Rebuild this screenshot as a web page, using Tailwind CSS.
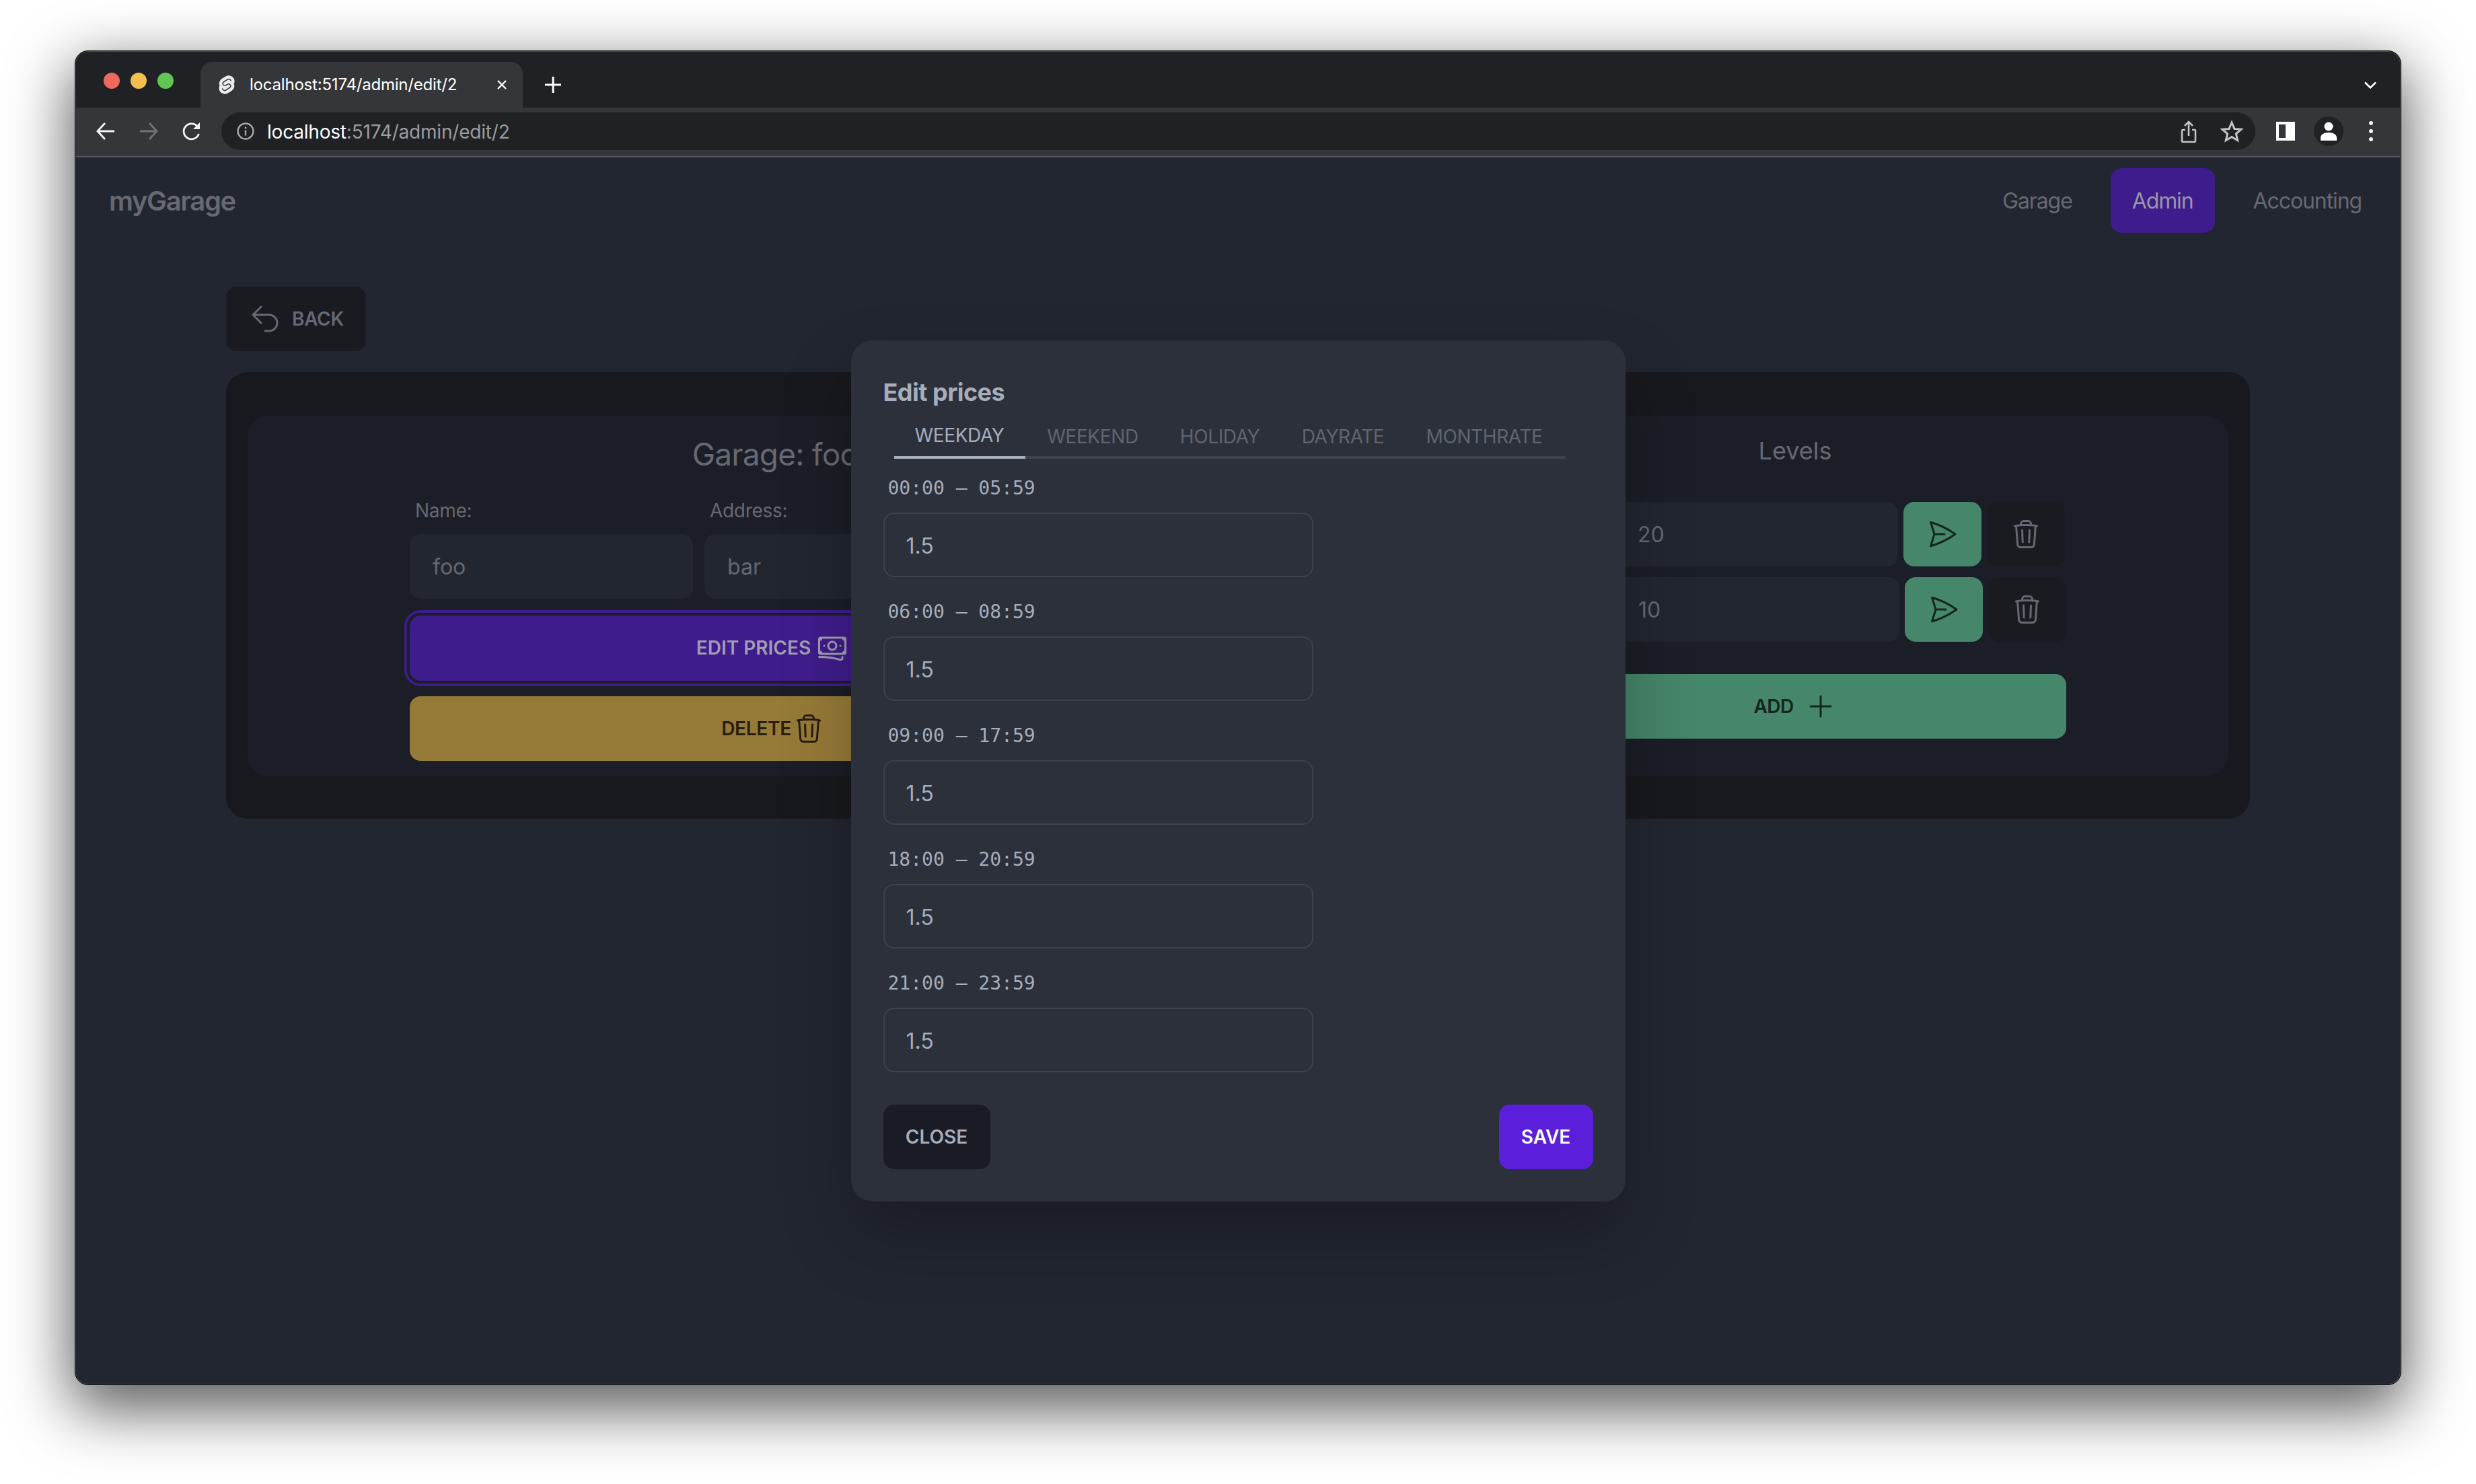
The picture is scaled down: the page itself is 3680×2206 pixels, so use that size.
<!DOCTYPE html>
<html lang="en">
  <head>
    <meta charset="UTF-8" />
    <title>localhost:5174/admin/edit/2</title>
    <script src="https://cdn.jsdelivr.net/npm/@tailwindcss/browser@4"></script>
  </head>
  <body class="bg-white font-['Inter',sans-serif]">
    <div class="w-[3680px] h-[2206px] pl-[111px] pt-[75px] overflow-hidden">
      <!-- Browser window -->
      <div class="relative w-[3458px] h-[1984px] rounded-[20px] border border-black bg-[#222630] shadow-[0_30px_90px_6px_rgba(0,0,0,0.65)] overflow-hidden flex flex-col">
        <div class="absolute inset-0 z-30 rounded-[19px] border border-[#4a4c54] pointer-events-none"></div>

        <!-- Tab strip -->
        <div class="h-[84px] shrink-0 bg-[#202124] flex items-end pl-[186px] relative">
          <div class="absolute left-[42px] top-[32px] flex gap-[16px]">
            <span class="w-[24px] h-[24px] rounded-full bg-[#ec6a5e]"></span>
            <span class="w-[24px] h-[24px] rounded-full bg-[#f4bf4f]"></span>
            <span class="w-[24px] h-[24px] rounded-full bg-[#61c554]"></span>
          </div>
          <div class="w-[479px] h-[68px] bg-[#35363a] rounded-t-[18px] flex items-center pl-[26px] text-white">
            <svg class="w-[26px] h-[30px] mr-[21px] shrink-0" viewBox="0 0 24 24" fill="#ececec" stroke="#ececec" stroke-width="1.5">
              <path d="M10.354 21.125a4.44 4.44 0 0 1-4.765-1.767 4.109 4.109 0 0 1-.703-3.107 3.898 3.898 0 0 1 .134-.522l.105-.321.287.21a7.21 7.21 0 0 0 2.186 1.092l.208.063-.02.208a1.253 1.253 0 0 0 .226.83 1.337 1.337 0 0 0 1.435.533 1.231 1.231 0 0 0 .343-.15l5.59-3.562a1.164 1.164 0 0 0 .524-.778 1.242 1.242 0 0 0-.211-.937 1.338 1.338 0 0 0-1.435-.533 1.23 1.23 0 0 0-.343.15l-2.133 1.36a4.078 4.078 0 0 1-1.135.499 4.44 4.44 0 0 1-4.765-1.766 4.108 4.108 0 0 1-.702-3.108 3.855 3.855 0 0 1 1.742-2.582l5.589-3.563a4.072 4.072 0 0 1 1.135-.499 4.44 4.44 0 0 1 4.765 1.767 4.109 4.109 0 0 1 .703 3.107 3.943 3.943 0 0 1-.134.522l-.105.321-.286-.21a7.204 7.204 0 0 0-2.187-1.093l-.208-.063.02-.207a1.255 1.255 0 0 0-.226-.831 1.337 1.337 0 0 0-1.435-.532 1.231 1.231 0 0 0-.343.15L8.62 9.368a1.162 1.162 0 0 0-.524.778 1.24 1.24 0 0 0 .211.937 1.338 1.338 0 0 0 1.435.533 1.235 1.235 0 0 0 .344-.151l2.132-1.36a4.067 4.067 0 0 1 1.135-.498 4.44 4.44 0 0 1 4.765 1.766 4.108 4.108 0 0 1 .702 3.108 3.857 3.857 0 0 1-1.742 2.583l-5.589 3.562a4.072 4.072 0 0 1-1.135.499m10.358-17.95C18.484-.015 14.082-.96 10.9 1.068L5.31 4.63a6.412 6.412 0 0 0-2.896 4.295 6.753 6.753 0 0 0 .666 4.336 6.43 6.43 0 0 0-.96 2.396 6.833 6.833 0 0 0 1.168 5.167c2.229 3.19 6.63 4.135 9.812 2.108l5.59-3.562a6.41 6.41 0 0 0 2.896-4.295 6.756 6.756 0 0 0-.665-4.336 6.429 6.429 0 0 0 .958-2.396 6.831 6.831 0 0 0-1.167-5.168Z" />
            </svg>
            <span class="text-[24px] leading-none w-[365px] whitespace-nowrap tracking-[-0.2px]">localhost:5174/admin/edit/2</span>
            <svg class="w-[20px] h-[20px]" viewBox="0 0 20 20" stroke="#fff" stroke-width="2.4" fill="none"><path d="M4 4l12 12M16 4L4 16" /></svg>
          </div>
          <svg class="w-[26px] h-[26px] ml-[32px] mb-[21px]" viewBox="0 0 26 26" stroke="#fff" stroke-width="3" fill="none"><path d="M13 1v24M1 13h24" /></svg>
          <svg class="absolute right-[34px] top-[44px] w-[22px] h-[14px]" viewBox="0 0 22 14" stroke="#fff" stroke-width="2.6" fill="none"><path d="M3 2.5l8 8 8-8" /></svg>
        </div>

        <!-- Toolbar -->
        <div class="h-[74px] shrink-0 bg-[#35363a] border-b-2 border-[#55575d] flex items-center pl-[30px] pr-[30px] pb-[2px]">
          <svg class="w-[30px] h-[30px]" viewBox="0 0 30 30" stroke="#f1f3f4" stroke-width="2.8" fill="none"><path d="M28 15H3M14 3L3 15l11 12" /></svg>
          <svg class="w-[30px] h-[30px] ml-[34px]" viewBox="0 0 30 30" stroke="#717275" stroke-width="2.8" fill="none"><path d="M2 15h25M16 3l11 12-11 12" /></svg>
          <svg class="w-[30px] h-[30px] ml-[34px]" viewBox="0 0 30 30" stroke="#f1f3f4" stroke-width="2.8" fill="none"><path d="M25.5 19a11.5 11.5 0 1 1-2.2-11.2L26 11" /><path d="M27 2v10H17z" fill="#f1f3f4" stroke="none" /></svg>
          <div class="ml-[29px] w-[3023px] h-[56px] rounded-full bg-[#202124] flex items-center pl-[23px] relative">
            <svg class="w-[26px] h-[26px]" viewBox="0 0 26 26" fill="none" stroke="#a4a6a9" stroke-width="2.4"><circle cx="13" cy="13" r="11.5" /><path d="M13 11.5v8" /><path d="M13 6.5v3" /></svg>
            <span class="ml-[19px] text-[28px] text-white whitespace-nowrap tracking-[-0.2px] pt-[2px]">localhost<span class="text-[#9a9ca0]">:5174/admin/edit/2</span></span>
            <svg class="absolute left-[2912px] top-[12px] w-[24px] h-[34px]" viewBox="0 0 24 34" fill="none" stroke="#c2c4c6" stroke-width="2.6"><path d="M7 14H3.5a1.5 1.5 0 0 0-1.5 1.5v15A1.5 1.5 0 0 0 3.500 32h17a1.500 1.500 0 0 0 1.500-1.500v-15a1.500 1.500 0 0 0-1.500-1.500H17" /><path d="M12 23V3M6 8l6-6 6 6" /></svg>
            <svg class="absolute left-[2971px] top-[11px] w-[34px] h-[34px]" viewBox="0 0 34 34" fill="none" stroke="#c2c4c6" stroke-width="3"><path d="M17 4l4 9.500 10 .8-7.600 6.500 2.300 9.900L17 25.500 8.300 30.700l2.300-9.900L3 14.300l10-.8z" /></svg>
          </div>
          <div class="ml-[31px] w-[28px] h-[28px] border-[4px] border-white border-r-[14px] box-border"></div>
          <div class="ml-[28px] w-[44px] h-[44px] rounded-full bg-[#202124] flex items-center justify-center">
            <svg class="w-[26px] h-[30px]" viewBox="0 0 26 30" fill="#fff"><circle cx="13" cy="8" r="6.500" /><path d="M1 29v-4c0-5 5-8 12-8s12 3 12 8v4z" /></svg>
          </div>
          <div class="ml-[38px] flex flex-col gap-[6px]">
            <span class="w-[6px] h-[6px] rounded-full bg-[#f1f3f4]"></span>
            <span class="w-[6px] h-[6px] rounded-full bg-[#f1f3f4]"></span>
            <span class="w-[6px] h-[6px] rounded-full bg-[#f1f3f4]"></span>
          </div>
        </div>

        <!-- Page -->
        <div class="relative flex-1 text-[#666973]">
          <nav class="flex items-center justify-between pl-[50px] pr-[26px] pt-[16px]">
            <span class="text-[40px] font-semibold tracking-[-1.4px] pt-[2px]">myGarage</span>
            <div class="flex items-center gap-[25px] text-[32px] tracking-[-1.1px]">
              <a class="h-[96px] px-[32px] flex items-center pt-[2px]">Garage</a>
              <a class="h-[96px] px-[32px] flex items-center pt-[2px] rounded-2xl bg-[#3f1c8c] text-[#9a97a6]">Admin</a>
              <a class="h-[96px] px-[32px] flex items-center pt-[2px]">Accounting</a>
            </div>
          </nav>

          <div class="pl-[224px] mt-[80px]">
            <button class="w-[208px] h-[96px] rounded-2xl bg-[#191b20] flex items-center pl-[34px] gap-[16px] text-[28px] font-semibold tracking-[-0.3px]">
              <svg class="w-[48px] h-[48px] shrink-0" viewBox="0 0 24 24" fill="none" stroke="currentColor" stroke-width="1.500" stroke-linecap="round" stroke-linejoin="round"><path d="M9 15L3 9m0 0l6-6M3 9h12a6 6 0 010 12h-3" /></svg>
              BACK
            </button>

            <div class="mt-[31px] w-[3008px] rounded-[32px] bg-[#18191e] px-[32px] pt-[65px] pb-[63px]">
              <div class="rounded-[32px] bg-[#1b1e26] h-[536px] px-[241px] flex justify-between">
                <!-- Garage form -->
                <div class="w-[1078px] pt-[27px]">
                  <h2 class="h-[60px] leading-[60px] text-[46px] text-center tracking-[-0.8px] pl-[8px]">Garage: foo</h2>
                  <div class="flex gap-[17px] mt-[36px] text-[28px] leading-[36px] tracking-[-0.3px]">
                    <label class="w-[421px] pl-[8px]">Name:</label>
                    <label class="w-[421px] pl-[8px]">Address:</label>
                  </div>
                  <div class="flex gap-[17px] mt-[17px] text-[32px]">
                    <div class="w-[421px] h-[96px] rounded-2xl bg-[#212630] flex items-center pl-[34px] pt-[2px]">foo</div>
                    <div class="w-[421px] h-[96px] rounded-2xl bg-[#212630] flex items-center pl-[34px] pt-[2px]">bar</div>
                  </div>
                  <button class="mt-[25px] w-full h-[97px] pb-[2px] rounded-2xl bg-[#3f1c8c] outline-[4px] outline-offset-[4px] outline-[#3f1c8c] flex items-center justify-center gap-[8px] text-[28px] font-semibold text-[#a29eb0]">
                    EDIT PRICES
                    <svg class="w-[48px] h-[48px]" viewBox="0 0 24 24" fill="none" stroke="currentColor" stroke-width="1.500" stroke-linecap="round" stroke-linejoin="round"><path d="M2.250 18.750a60.070 60.070 0 0115.797 2.101c.727.198 1.453-.342 1.453-1.096V18.750M3.750 4.500v.75A.75.75 0 013 6h-.75m0 0v-.375c0-.621.504-1.125 1.125-1.125H20.250M2.250 6v9m18-10.500v.75c0 .414.336.75.75.75h.75m-1.500-1.500h.375c.621 0 1.125.504 1.125 1.125v9.750c0 .621-.504 1.125-1.125 1.125h-.375m1.500-1.500H21a.75.75 0 00-.75.75v.75m0 0H3.750m0 0h-.375a1.125 1.125 0 01-1.125-1.125V15m1.500 1.500v-.75A.75.75 0 003 15h-.75M15 10.500a3 3 0 11-6 0 3 3 0 016 0zm3 0h.008v.008H18V10.500zm-12 0h.008v.008H6V10.500z" /></svg>
                  </button>
                  <button class="mt-[23px] w-full h-[96px] rounded-2xl bg-[#967a37] flex items-center justify-center gap-[2px] pl-[2px] text-[28px] font-semibold tracking-[-0.3px] text-[#281e0b]">
                    DELETE
                    <svg class="w-[48px] h-[48px]" viewBox="0 0 24 24" fill="none" stroke="currentColor" stroke-width="1.500" stroke-linecap="round" stroke-linejoin="round"><path d="M14.740 9l-.346 9m-4.788 0L9.260 9m9.968-3.210c.342.052.682.107 1.022.166m-1.022-.165L18.160 19.673a2.250 2.250 0 01-2.244 2.077H8.084a2.250 2.250 0 01-2.244-2.077L4.772 5.790m14.456 0a48.108 48.108 0 00-3.478-.397m-12 .562c.34-.059.68-.114 1.022-.165m0 0a48.110 48.110 0 013.478-.397m7.500 0v-.916c0-1.180-.91-2.164-2.090-2.201a51.964 51.964 0 00-3.320 0c-1.180.037-2.090 1.022-2.090 2.201v.916m7.500 0a48.667 48.667 0 00-7.500 0" /></svg>
                  </button>
                </div>

                <!-- Levels -->
                <div class="w-[812px] pt-[22px]">
                  <h2 class="h-[60px] leading-[60px] text-[36px] text-center pl-[6px]">Levels</h2>
                  <div class="mt-[46px] flex justify-end gap-[8px] pr-[2px] text-[32px]">
                    <div class="w-[419px] h-[96px] rounded-2xl bg-[#212630] flex items-center pl-[32px] pt-[1px]">20</div>
                    <button class="w-[116px] h-[96px] rounded-2xl bg-[#46866a] text-[#14261d] flex items-center justify-center">
                      <svg class="w-[48px] h-[48px]" viewBox="0 0 24 24" fill="none" stroke="currentColor" stroke-width="1.500" stroke-linecap="round" stroke-linejoin="round"><path d="M6 12L3.269 3.126A59.768 59.768 0 0121.485 12 59.770 59.770 0 013.270 20.876L5.999 12zm0 0h7.500" /></svg>
                    </button>
                    <button class="w-[116px] h-[96px] rounded-2xl bg-[#191b20] flex items-center justify-center">
                      <svg class="w-[48px] h-[48px]" viewBox="0 0 24 24" fill="none" stroke="currentColor" stroke-width="1.500" stroke-linecap="round" stroke-linejoin="round"><path d="M14.740 9l-.346 9m-4.788 0L9.260 9m9.968-3.210c.342.052.682.107 1.022.166m-1.022-.165L18.160 19.673a2.250 2.250 0 01-2.244 2.077H8.084a2.250 2.250 0 01-2.244-2.077L4.772 5.790m14.456 0a48.108 48.108 0 00-3.478-.397m-12 .562c.34-.059.68-.114 1.022-.165m0 0a48.110 48.110 0 013.478-.397m7.500 0v-.916c0-1.180-.91-2.164-2.090-2.201a51.964 51.964 0 00-3.320 0c-1.180.037-2.090 1.022-2.090 2.201v.916m7.500 0a48.667 48.667 0 00-7.500 0" /></svg>
                    </button>
                  </div>
                  <div class="mt-[16px] flex justify-end gap-[8px] text-[32px]">
                    <div class="w-[421px] h-[96px] rounded-2xl bg-[#212630] flex items-center pl-[33px] pt-[1px]">10</div>
                    <button class="w-[116px] h-[96px] rounded-2xl bg-[#46866a] text-[#14261d] flex items-center justify-center">
                      <svg class="w-[48px] h-[48px]" viewBox="0 0 24 24" fill="none" stroke="currentColor" stroke-width="1.500" stroke-linecap="round" stroke-linejoin="round"><path d="M6 12L3.269 3.126A59.768 59.768 0 0121.485 12 59.770 59.770 0 013.270 20.876L5.999 12zm0 0h7.500" /></svg>
                    </button>
                    <button class="w-[116px] h-[96px] rounded-2xl bg-[#191b20] flex items-center justify-center">
                      <svg class="w-[48px] h-[48px]" viewBox="0 0 24 24" fill="none" stroke="currentColor" stroke-width="1.500" stroke-linecap="round" stroke-linejoin="round"><path d="M14.740 9l-.346 9m-4.788 0L9.260 9m9.968-3.210c.342.052.682.107 1.022.166m-1.022-.165L18.160 19.673a2.250 2.250 0 01-2.244 2.077H8.084a2.250 2.250 0 01-2.244-2.077L4.772 5.790m14.456 0a48.108 48.108 0 00-3.478-.397m-12 .562c.34-.059.68-.114 1.022-.165m0 0a48.110 48.110 0 013.478-.397m7.500 0v-.916c0-1.180-.91-2.164-2.090-2.201a51.964 51.964 0 00-3.320 0c-1.180.037-2.090 1.022-2.090 2.201v.916m7.500 0a48.667 48.667 0 00-7.500 0" /></svg>
                    </button>
                  </div>
                  <button class="mt-[48px] w-full h-[96px] rounded-2xl bg-[#46866a] text-[#14261d] flex items-center justify-center gap-[16px] pl-[6px] text-[28px] font-semibold tracking-[-0.6px]">
                    ADD
                    <svg class="w-[48px] h-[48px]" viewBox="0 0 24 24" fill="none" stroke="currentColor" stroke-width="1.500" stroke-linecap="round" stroke-linejoin="round"><path d="M12 4.500v15m7.500-7.500h-15" /></svg>
                  </button>
                </div>
              </div>
            </div>
          </div>

          <!-- Edit prices modal -->
          <div class="absolute inset-0 flex items-center justify-center">
            <div class="w-[1151px] h-[1280px] rounded-[32px] bg-[#2b303b] shadow-[0_50px_100px_rgba(0,0,0,0.25)] p-[48px] text-[#a6adbb]">
              <h3 class="text-[36px] leading-[58px] font-bold tracking-[-0.5px]">Edit prices</h3>
              <div class="ml-[16px] w-[998px] h-[68px] mt-[2px] flex border-b-4 border-[#3d424e] text-[28px] tracking-[-0.4px] text-[#61656f]">
                <span class="w-[195px] h-[68px] pt-[6px] pb-[4px] flex items-center justify-center border-b-4 border-[#a6adbb] text-[#a6adbb]">WEEKDAY</span>
                <span class="ml-[2px] w-[197px] h-[64px] pt-[6px] flex items-center justify-center">WEEKEND</span>
                <span class="w-[181px] h-[64px] pt-[6px] flex items-center justify-center">HOLIDAY</span>
                <span class="w-[185px] h-[64px] pt-[6px] flex items-center justify-center">DAYRATE</span>
                <span class="w-[235px] h-[64px] pt-[6px] flex items-center justify-center">MONTHRATE</span>
              </div>
              <div class="mt-[26px] flex flex-col gap-[34px]">
                <div>
                  <div class="pl-[7px] h-[36px] leading-[36px] text-[28px] font-['DejaVu_Sans_Mono',monospace]">00:00 – 05:59</div>
                  <div class="mt-[18px] w-[639px] h-[96px] rounded-2xl border-2 border-[#3d424e] flex items-center pl-[32px] pt-[3px] text-[32px]">1.5</div>
                </div>
                <div>
                  <div class="pl-[7px] h-[36px] leading-[36px] text-[28px] font-['DejaVu_Sans_Mono',monospace]">06:00 – 08:59</div>
                  <div class="mt-[18px] w-[639px] h-[96px] rounded-2xl border-2 border-[#3d424e] flex items-center pl-[32px] pt-[3px] text-[32px]">1.5</div>
                </div>
                <div>
                  <div class="pl-[7px] h-[36px] leading-[36px] text-[28px] font-['DejaVu_Sans_Mono',monospace]">09:00 – 17:59</div>
                  <div class="mt-[18px] w-[639px] h-[96px] rounded-2xl border-2 border-[#3d424e] flex items-center pl-[32px] pt-[3px] text-[32px]">1.5</div>
                </div>
                <div>
                  <div class="pl-[7px] h-[36px] leading-[36px] text-[28px] font-['DejaVu_Sans_Mono',monospace]">18:00 – 20:59</div>
                  <div class="mt-[18px] w-[639px] h-[96px] rounded-2xl border-2 border-[#3d424e] flex items-center pl-[32px] pt-[3px] text-[32px]">1.5</div>
                </div>
                <div>
                  <div class="pl-[7px] h-[36px] leading-[36px] text-[28px] font-['DejaVu_Sans_Mono',monospace]">21:00 – 23:59</div>
                  <div class="mt-[18px] w-[639px] h-[96px] rounded-2xl border-2 border-[#3d424e] flex items-center pl-[32px] pt-[3px] text-[32px]">1.5</div>
                </div>
              </div>
              <div class="mt-[48px] flex justify-between text-[28px] font-semibold">
                <button class="h-[96px] w-[159px] rounded-2xl bg-[#191c24]">CLOSE</button>
                <button class="h-[96px] w-[140px] rounded-2xl bg-[#5b1fdc] text-white">SAVE</button>
              </div>
            </div>
          </div>
        </div>
      </div>
    </div>
  </body>
</html>
